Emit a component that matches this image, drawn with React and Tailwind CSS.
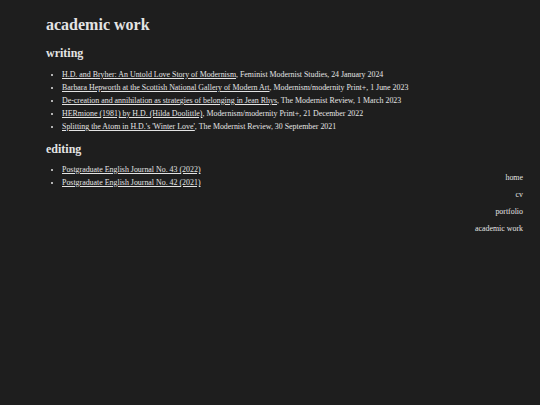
export default function App() {
  const writing = [
    ["H.D. and Bryher: An Untold Love Story of Modernism", "Feminist Modernist Studies, 24 January 2024"],
    ["Barbara Hepworth at the Scottish National Gallery of Modern Art", "Modernism/modernity Print+, 1 June 2023"],
    ["De-creation and annihilation as strategies of belonging in Jean Rhys", "The Modernist Review, 1 March 2023"],
    ["HERmione (1981) by H.D. (Hilda Doolittle)", "Modernism/modernity Print+, 21 December 2022"],
    ["Splitting the Atom in H.D.'s 'Winter Love'", "The Modernist Review, 30 September 2021"],
  ];
  const editing = ["Postgraduate English Journal No. 43 (2022)", "Postgraduate English Journal No. 42 (2021)"];
  const nav = ["home", "cv", "portfolio", "academic work"];

  return (
    <div
      className="min-h-screen w-full bg-[#1e1e1e] text-[#e4e4e4] flex"
      style={{ fontFamily: '"Liberation Serif", "Times New Roman", serif' }}
    >
      <main className="flex-1 pl-[46px] pt-[15px]">
        <h1 className="text-[16px] font-bold leading-[20px]">academic work</h1>
        <h2 className="text-[12px] font-bold mt-[10px] leading-[16px]">writing</h2>
        <ul className="list-disc pl-[16px] mt-[7px] text-[7.9px] leading-[13px]">
          {writing.map(([title, pub]) => (
            <li key={title}>
              <a href="#" className="underline">{title}</a>, {pub}
            </li>
          ))}
        </ul>
        <h2 className="text-[12px] font-bold mt-[8px] leading-[16px]">editing</h2>
        <ul className="list-disc pl-[16px] mt-[6px] text-[7.9px] leading-[13px]">
          {editing.map((t) => (
            <li key={t}>
              <a href="#" className="underline">{t}</a>
            </li>
          ))}
        </ul>
      </main>
      <nav className="pt-[171px] pr-[17px] flex flex-col items-end gap-[4px] text-[7.9px] leading-[13px]">
        {nav.map((n) => (
          <a key={n} href="#">{n}</a>
        ))}
      </nav>
    </div>
  );
}
